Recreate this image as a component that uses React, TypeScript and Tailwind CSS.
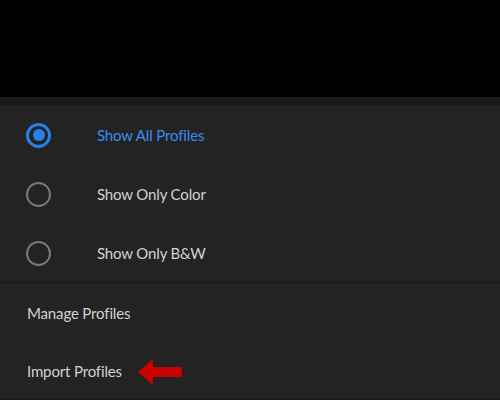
import { useState } from 'react';

type Filter = 'all' | 'color' | 'bw';

const filters: { id: Filter; label: string }[] = [
  { id: 'all', label: 'Show All Profiles' },
  { id: 'color', label: 'Show Only Color' },
  { id: 'bw', label: 'Show Only B&W' },
];

function Radio({ checked }: { checked: boolean }) {
  return (
    <span
      className={
        checked
          ? 'flex h-[25px] w-[25px] items-center justify-center rounded-full border-[3px] border-[#2680eb]'
          : 'flex h-[25px] w-[25px] items-center justify-center rounded-full border-[2px] border-[#7a7a7a]'
      }
    >
      {checked && <span className="h-[12px] w-[12px] rounded-full bg-[#2680eb]" />}
    </span>
  );
}

function ArrowLeft() {
  return (
    <svg width="45" height="28" viewBox="0 0 45 28" className="ml-[16px] mt-[2px]">
      <path d="M0 14 L15 1 L15 9 L44 9 L44 19 L15 19 L15 27 Z" fill="#c80000" />
    </svg>
  );
}

export default function App() {
  const [filter, setFilter] = useState<Filter>('all');

  return (
    <div className="flex h-[400px] w-[500px] flex-col overflow-hidden bg-black font-['Lato',sans-serif] text-[15px] tracking-[-0.15px]">
      <div className="h-[97px] shrink-0 bg-black" />
      <div className="h-[8px] shrink-0 bg-[#1a1a1a]" />
      <div className="flex flex-1 flex-col bg-[#232323]">
        {filters.map((f) => (
          <button
            key={f.id}
            onClick={() => setFilter(f.id)}
            className="flex h-[59px] items-center pl-[26px] pt-[1px] text-left"
          >
            <Radio checked={filter === f.id} />
            <span className={filter === f.id ? 'ml-[46px] text-[#378ef0]' : 'ml-[46px] text-[#d2d2d2]'}>
              {f.label}
            </span>
          </button>
        ))}
        <div className="h-px bg-[#181818]" />
        <div className="flex h-[60px] items-center pl-[27px] text-[#d2d2d2]">Manage Profiles</div>
        <div className="flex h-[56px] items-center pl-[27px] text-[#d2d2d2]">
          Import Profiles
          <ArrowLeft />
        </div>
        <div className="h-[3px] bg-[#1a1a1a]" />
      </div>
    </div>
  );
}
